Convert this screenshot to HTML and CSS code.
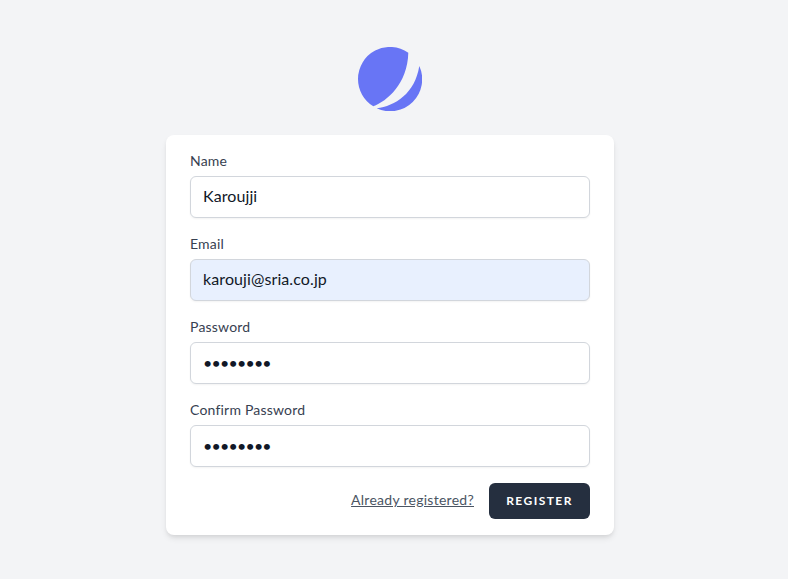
FILE: index.html
```html
<!DOCTYPE html>
<html lang="en">
<head>
<meta charset="utf-8">
<title>Register</title>
<link rel="stylesheet" href="styles.css">
</head>
<body>
<main class="page">
  <a class="logo" href="#" aria-label="Home">
    <svg width="64" height="64" viewBox="0 0 64 64">
      <path class="logo-shape" d="M50.3 5.7A32 32 0 0 0 0 32A32 32 0 0 0 15.3 59.3C29 54 49.5 37 50.3 5.7Z"/>
      <path class="logo-shape" d="M61.3 19A32 32 0 0 1 18.7 61.3C37 59 57 46.5 61.3 19Z"/>
    </svg>
  </a>
  <form class="card">
    <div class="field">
      <label class="label" for="name">Name</label>
      <input class="input" id="name" type="text" value="Karoujji">
    </div>
    <div class="field">
      <label class="label" for="email">Email</label>
      <input class="input input-autofill" id="email" type="email" value="karouji@sria.co.jp">
    </div>
    <div class="field">
      <label class="label" for="password">Password</label>
      <input class="input input-secret" id="password" type="password" value="password">
    </div>
    <div class="field">
      <label class="label" for="confirm">Confirm Password</label>
      <input class="input input-secret" id="confirm" type="password" value="password">
    </div>
    <div class="actions">
      <a class="link" href="#">Already registered?</a>
      <button class="button" type="button">Register</button>
    </div>
  </form>
</main>
</body>
</html>
```
FILE: styles.css
```css
* { box-sizing: border-box; }
html, body { margin: 0; height: 100%; }
body {
  background: #f3f4f6;
  font-family: "Lato", "Open Sans", sans-serif;
  color: #111827;
}
.page {
  min-height: 100%;
  display: flex;
  flex-direction: column;
  align-items: center;
  padding: 47px 8px 0 0;
}
.logo { display: block; width: 64px; height: 64px; }
.logo svg { display: block; }
.logo-shape { fill: #6875f5; }
.card {
  width: 448px;
  margin-top: 24px;
  padding: 15px 24px 16px;
  background: #fff;
  border-radius: 8px;
  box-shadow: 0 4px 6px -1px rgba(0,0,0,.1), 0 2px 4px -1px rgba(0,0,0,.06);
}
.field { margin-bottom: 15px; }
.label {
  display: block;
  padding-top: 1px;
  font-size: 14px;
  line-height: 20px;
  letter-spacing: .2px;
  color: #374151;
}
.input {
  display: block;
  width: 100%;
  height: 42px;
  margin-top: 5px;
  padding: 6px 12px 10px;
  border: 1px solid #d2d6dc;
  border-radius: 6px;
  background: #fff;
  font: inherit;
  font-size: 16px;
  line-height: 24px;
  letter-spacing: .1px;
  color: #111827;
  box-shadow: 0 1px 2px 0 rgba(0,0,0,.05);
  outline: none;
}
.input-autofill { background: #e8f0fe; }
.input-secret { letter-spacing: -.8px; padding: 7px 12px 9px; }
.actions {
  display: flex;
  justify-content: flex-end;
  align-items: center;
  gap: 15px;
  margin-top: 16px;
}
.link {
  padding-bottom: 2px;
  font-size: 14px;
  line-height: 20px;
  letter-spacing: .27px;
  color: #4b5563;
  text-decoration: underline;
}
.button {
  width: 101px;
  height: 36px;
  padding: 0 0 2px;
  border: 0;
  border-radius: 6px;
  background: #252f3f;
  color: #fff;
  font: inherit;
  font-size: 12px;
  font-weight: 700;
  letter-spacing: 1.45px;
  text-transform: uppercase;
}
```
